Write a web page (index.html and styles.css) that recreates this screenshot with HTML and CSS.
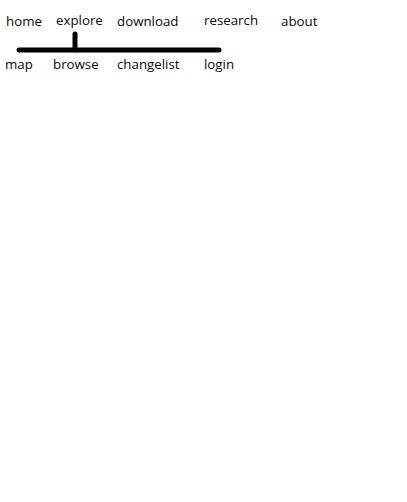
FILE: index.html
```html
<!DOCTYPE html>
<html>
<head>
<meta charset="utf-8">
<link rel="stylesheet" href="styles.css">
</head>
<body>
<nav class="sketch">
  <div class="row row-top">
    <span class="item c1">home</span>
    <span class="item c2 up">explore</span>
    <span class="item c3">download</span>
    <span class="item c4 up">research</span>
    <span class="item c5">about</span>
  </div>
  <svg class="connector" width="230" height="27" viewBox="0 0 230 27">
    <line x1="75" y1="5" x2="75" y2="21" stroke="#000" stroke-width="5" stroke-linecap="round"/>
    <line x1="19" y1="21" x2="219" y2="21" stroke="#000" stroke-width="5" stroke-linecap="round"/>
  </svg>
  <div class="row row-bottom">
    <span class="item c1 left">map</span>
    <span class="item c2 left">browse</span>
    <span class="item c3">changelist</span>
    <span class="item c4">login</span>
  </div>
</nav>
</body>
</html>
```
FILE: styles.css
```css
html, body {
  margin: 0;
  padding: 0;
  background: #fff;
}
.sketch {
  font-family: "Open Sans", "Noto Sans", sans-serif;
  font-size: 13.3px;
  color: #0a0a0a;
  padding-top: 13px;
}
.row {
  display: grid;
  grid-template-columns: 50px 61px 87px 77px auto;
  padding-left: 6px;
  line-height: 16px;
}
.item {
  white-space: nowrap;
}
.up {
  position: relative;
  top: -1px;
}
.left {
  margin-left: -1px;
}
.c2.left {
  margin-left: -3px;
}
.connector {
  display: block;
}
```
